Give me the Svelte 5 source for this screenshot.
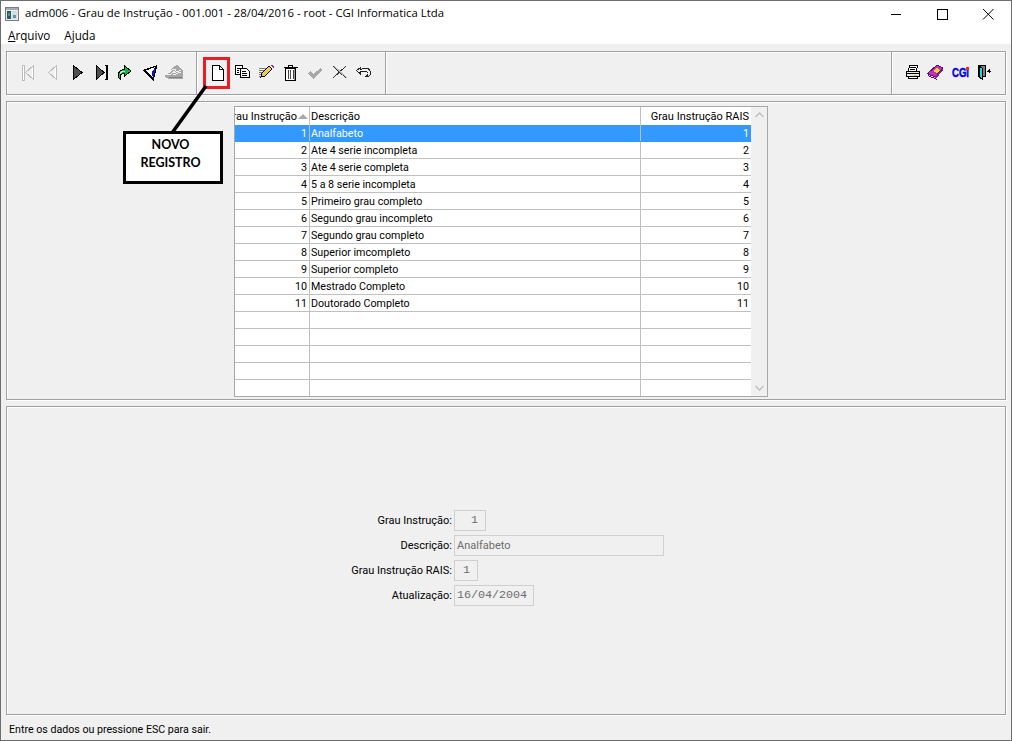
<script>
  const rows = [
    [1, 'Analfabeto', 1],
    [2, 'Ate 4 serie incompleta', 2],
    [3, 'Ate 4 serie completa', 3],
    [4, '5 a 8 serie incompleta', 4],
    [5, 'Primeiro grau completo', 5],
    [6, 'Segundo grau incompleto', 6],
    [7, 'Segundo grau completo', 7],
    [8, 'Superior imcompleto', 8],
    [9, 'Superior completo', 9],
    [10, 'Mestrado Completo', 10],
    [11, 'Doutorado Completo', 11],
    ['', '', ''], ['', '', ''], ['', '', ''], ['', '', ''], ['', '', '']
  ];
</script>

<div class="window">
  <header class="titlebar">
    <svg class="appicon" viewBox="0 0 14 14" width="14" height="14">
      <rect x="0.5" y="0.5" width="13" height="13" fill="#e8ecee" stroke="#7c7c7c"/>
      <rect x="1" y="1" width="12" height="2" fill="#a4aeb2"/>
      <rect x="2" y="4" width="4" height="8" fill="#2c5a5c"/>
      <rect x="3" y="6" width="2" height="3" fill="#3fa06a"/>
      <rect x="7" y="4" width="5" height="8" fill="#cfdce2"/>
      <rect x="8" y="8" width="3" height="3" fill="#6a8fb0"/>
    </svg>
    <span class="title">adm006 - Grau de Instrução - 001.001 - 28/04/2016 - root - CGI Informatica Ltda</span>
    <div class="controls">
      <svg viewBox="0 0 46 30" width="46" height="30" class="ctl"><path d="M18 13.500h10" stroke="#000" fill="none"/></svg>
      <svg viewBox="0 0 46 30" width="46" height="30" class="ctl"><rect x="18.500" y="8.500" width="10" height="10" stroke="#000" fill="none"/></svg>
      <svg viewBox="0 0 46 30" width="46" height="30" class="ctl"><path d="M18 8l10.500 10.500M28.500 8L18 18.500" stroke="#000" fill="none"/></svg>
    </div>
  </header>

  <nav class="menubar">
    <span><u>A</u>rquivo</span>
    <span>Ajuda</span>
  </nav>

  <section class="toolbar etched">
    <div class="group g1">
      <svg class="ic" viewBox="0 0 16 16"><path d="M2.500 0v15h1.500V0z" fill="#fff" stroke="#bdbdbd"/><path d="M13.500 .5L5.500 7.500l8 7z" fill="#f0f0f0" stroke="#bdbdbd"/><path d="M12.500 3v10" stroke="#fff"/></svg>
      <svg class="ic" viewBox="0 0 16 16"><path d="M12.500 .5L4.500 7.500l8 7z" fill="#f0f0f0" stroke="#bdbdbd"/><path d="M11.500 3v10" stroke="#fff"/></svg>
      <svg class="ic" viewBox="0 0 16 16"><path d="M3.500 .5L12 7.500l-8.500 7z" fill="#505050" stroke="#000"/></svg>
      <svg class="ic" viewBox="0 0 16 16"><path d="M2.500 .5L10 7.500l-7.500 7z" fill="#505050" stroke="#000"/><path d="M11 .5h2.500v14H11" fill="none" stroke="#000"/><path d="M12.500 1v13" stroke="#000"/></svg>
      <svg class="ic" viewBox="0 0 16 16"><path d="M4.500 14.500C.5 11 2 5 8.500 4.500V1L15 6l-6.500 5V8C5.500 8 3.500 10 4.500 14.500z" fill="#12b846" stroke="#000"/><path d="M4 9c1-2 3-3 5-3" stroke="#b8f5c8" fill="none"/></svg>
      <svg class="ic" viewBox="0 0 16 16"><path d="M0 5L15.500 0 11.500 16z" fill="#000"/><path d="M4 5.500L13.500 2 10.500 12z" fill="#fff"/><path d="M9.500 8L13.500 2 11.500 14z" fill="#1010c8"/></svg>
      <svg class="ic w18" viewBox="0 0 18 18"><path d="M0 11L8 3l4-2 6 5v9H4l-4-2z" fill="#a6a6a6"/><path d="M2 10l6-5 3 1-5 4zM9 9l7-3M8 11l8-3" fill="none" stroke="#f0f0f0"/><path d="M4 13h13" stroke="#808080"/></svg>
    </div>
    <div class="group g2">
      <svg class="ic" viewBox="0 0 16 16"><path d="M2.500 .5h7l3.500 3.500v11H2.500z" fill="#fff" stroke="#000"/><path d="M9.500 .5v3.500h3.500" fill="none" stroke="#000"/></svg>
      <svg class="ic" viewBox="0 0 16 16"><path d="M1.500 .5h7v3h-2v6h-5z" fill="#fff" stroke="#000"/><path d="M6.500 3.500h6l2.500 2.500v6H6.500z" fill="#fff" stroke="#000"/><path d="M8 6h4M8 8h5M8 10h5M3 3h3M3 5h2M3 7h2" stroke="#000"/></svg>
      <svg class="ic" viewBox="0 0 16 16"><path d="M1 3h9M1 5h8M1 7h6M1 9h5M1 11h4" stroke="#7a7a7a"/><path d="M3 12l1-4 7-7 3 3-7 7z" fill="#ecd23a" stroke="#000"/><path d="M12 0l3 3 1-1-2-2z" fill="#8b1f8b"/></svg>
      <svg class="ic" viewBox="0 0 16 16"><path d="M.5 2.500h14M5.500 2V.5h4V2" fill="none" stroke="#000"/><path d="M2.500 3.500h10v11.500h-10z" fill="#fff" stroke="#000"/><path d="M5 5v9M7.500 5v9M10 5v9" stroke="#444" stroke-width="1"/><path d="M11 4v11" stroke="#999"/></svg>
      <svg class="ic" viewBox="0 0 16 16"><path d="M1 8l3-2 2 3 8-6 1 2-9 9z" fill="#a8a8a8"/></svg>
      <svg class="ic" viewBox="0 0 16 16"><path d="M1 1l13 12M14 1L1 13" stroke="#333" fill="none"/><path d="M2 1l13 12" stroke="#b5b5b5" fill="none"/></svg>
      <svg class="ic" viewBox="0 0 16 16"><path d="M.5 5.500L4.500 2.500V4.500C9 2 14.500 3 14.500 8c0 2-1 3.500-3 3.500H9.500c2-.5 2.500-1.500 2.500-3 0-2-3-3-7.500-1.500v2z" fill="#f0f0f0" stroke="#222"/></svg>
    </div>
    <div class="group g3"></div>
    <div class="group g4">
      <svg class="ic" viewBox="0 0 16 16"><path d="M4.500 .5h8l-1 6h-8z" fill="#fff" stroke="#000"/><path d="M1.500 6.500h13v5h-13z" fill="#e8e8e8" stroke="#000"/><path d="M3.500 11.500h9v2h-9z" fill="#fff" stroke="#000"/><path d="M5 2.500h6M5 4.500h5M2 8.500h12" stroke="#000"/><path d="M9 10h3" stroke="#e3c93a"/></svg>
      <svg class="ic" viewBox="0 0 16 16"><path d="M0 8l9-8 6 3-8 9-6-2z" fill="#c030c0" stroke="#60105f"/><path d="M0 9l7 3 1 2-7-3z" fill="#f5d0f5" stroke="#60105f"/><path d="M7 12l8-9v2l-7 9z" fill="#8b1f8b"/><path d="M5 6l4-3 3 2-3 3z" fill="#e8d82a"/></svg>
      <svg class="ic w18 cgi" viewBox="0 0 18 16"><text x="0" y="12" textLength="17" lengthAdjust="spacingAndGlyphs" class="cgitext">CGi</text><rect x="14" y="2" width="3" height="3" fill="#ff2020"/></svg>
      <svg class="ic" viewBox="0 0 16 16"><path d="M2.500 .5h7v11h-7z" fill="#808080" stroke="#000"/><path d="M3 1l3 2v11l-3-2z" fill="#1fd8e0" stroke="#000"/><path d="M11 6h4M13 4v4M12 5v2" stroke="#000"/></svg>
    </div>
  </section>

  <section class="grid-panel etched">
    <div class="table">
      <div class="tbody">
        <div class="row head">
          <div class="c c1"><span class="clip">Grau Instrução</span><svg class="sort" viewBox="0 0 10 6" width="10" height="6"><path d="M0 6l5-5 5 5z" fill="#a8a8a8"/></svg></div>
          <div class="c c2">Descrição</div>
          <div class="c c3">Grau Instrução RAIS</div>
        </div>
        {#each rows as r, i}
          <div class="row" class:sel={i === 0}>
            <div class="c c1">{r[0]}</div>
            <div class="c c2">{r[1]}</div>
            <div class="c c3">{r[2]}</div>
          </div>
        {/each}
      </div>
      <div class="scroll">
        <svg viewBox="0 0 9 6" width="9" height="6"><path d="M.5 5L4.500 1l4 4" fill="none" stroke="#c0c0c0" stroke-width="1.500"/></svg>
        <svg viewBox="0 0 9 6" width="9" height="6"><path d="M.5 1l4 4 4-4" fill="none" stroke="#c0c0c0" stroke-width="1.500"/></svg>
      </div>
    </div>
  </section>

  <section class="form-panel etched">
    <div class="form">
      <label for="f1">Grau Instrução:</label>
      <div id="f1" class="field mono right w1">1</div>
      <label for="f2">Descrição:</label>
      <div id="f2" class="field w2">Analfabeto</div>
      <label for="f3">Grau Instrução RAIS:</label>
      <div id="f3" class="field mono right w3">1</div>
      <label for="f4">Atualização:</label>
      <div id="f4" class="field mono w4">16/04/2004</div>
    </div>
  </section>

  <footer class="status">Entre os dados ou pressione ESC para sair.</footer>

  <div class="redbox"></div>
  <svg class="pointer" viewBox="0 0 50 60" width="50" height="60"><path d="M39 1L5 48" stroke="#000" stroke-width="3.500" fill="none"/></svg>
  <div class="callout">NOVO<br />REGISTRO</div>
</div>

<style>
  :global(body) { margin: 0; background: #f0f0f0; }
  .window {
    position: relative;
    box-sizing: border-box;
    width: 1012px;
    height: 741px;
    display: flex;
    flex-direction: column;
    background: #f0f0f0;
    border: 1px solid #6e6e6e;
    font-family: Roboto, "Liberation Sans", sans-serif;
    font-size: 11px;
    color: #000;
    overflow: hidden;
  }
  .titlebar {
    height: 29px;
    flex: none;
    display: flex;
    align-items: center;
    background: #fff;
    padding-left: 4px;
    font-family: "Open Sans", sans-serif;
    font-size: 11.350px;
  }
  .appicon { flex: none; margin-right: 6px; margin-top: -3px; }
  .title { flex: 1; margin-top: -7px; }
  .controls { display: flex; flex: none; }
  .ctl { display: block; }
  .menubar {
    height: 14px;
    flex: none;
    display: flex;
    align-items: flex-start;
    gap: 14px;
    padding-left: 7px;
    background: #fff;
    font-family: "Open Sans", sans-serif;
    font-size: 11.700px;
    line-height: 10px;
  }
  .etched {
    border: 1px solid #a0a0a0;
    box-shadow: inset 1px 1px 0 #fff, 1px 1px 0 #fff;
    margin: 0 5px;
    flex: none;
  }
  .toolbar {
    margin-top: 7px;
    height: 44px;
    box-sizing: border-box;
    display: flex;
  }
  .group {
    display: flex;
    align-items: center;
    box-sizing: border-box;
    height: 100%;
    gap: 8px;
    border-right: 1px solid #a0a0a0;
    box-shadow: 1px 0 0 #fff;
  }
  .ic { width: 16px; height: 16px; display: block; flex: none; shape-rendering: crispEdges; overflow: visible; }
  .w18 { width: 18px; height: 18px; }
  .cgi { height: 16px; }
  .cgitext { font: 700 13px "Liberation Sans", sans-serif; fill: #0000f0; stroke: #0000f0; stroke-width: 0.500px; }
  .g1 { width: 190px; padding-left: 13px; }
  .g1 .ic:nth-child(3), .g1 .ic:nth-child(6) { margin-left: 2px; }
  .g1 .ic:nth-child(5) { margin-left: -2px; }
  .g1 .ic:nth-child(7) { margin-left: -1px; }
  .g2 { width: 189px; padding-left: 13px; }
  .g2 .ic:nth-child(4), .g2 .ic:nth-child(6) { margin-left: 1px; }
  .g3 { width: 506px; }
  .g4 { flex: 1; padding-left: 13px; border-right: 0; box-shadow: none; }
  .g4 .ic:nth-child(2) { margin-left: -1px; }
  .g4 .ic:nth-child(4) { margin-left: -2px; }
  .grid-panel {
    margin-top: 6px;
    height: 299px;
    box-sizing: border-box;
    padding: 4px 0 0 227px;
  }
  .table {
    width: 534px;
    height: 291px;
    box-sizing: border-box;
    border: 1px solid #a8a8a8;
    background: #fff;
    display: flex;
  }
  .tbody { width: 516px; flex: none; overflow: hidden; }
  .row { display: flex; height: 17px; box-sizing: border-box; border-bottom: 1px solid #c0c0c0; line-height: 18px; font-size: 10.700px; }
  .head { height: 18px; border-bottom: 0; line-height: 20px; font-size: 11px; }
  .head .c1 { position: relative; }
  .clip { position: absolute; right: 12px; top: 0; white-space: nowrap; }
  .sort { position: absolute; right: 1px; top: 6px; }
  .sel { background: #3399ff; color: #fff; border-bottom-color: #3399ff; }
  .c { box-sizing: border-box; height: 100%; border-right: 1px solid #c0c0c0; padding: 0 2px 0 1px; white-space: nowrap; overflow: hidden; }
  .c1 { width: 75px; text-align: right; }
  .c2 { width: 331px; }
  .c3 { width: 110px; text-align: right; border-right: 0; }
  .scroll {
    flex: 1;
    background: #f0f0f0;
    display: flex;
    flex-direction: column;
    justify-content: space-between;
    align-items: center;
    padding: 5px 0;
  }
  .form-panel {
    margin-top: 6px;
    height: 309px;
    box-sizing: border-box;
    padding: 103px 0 0 0;
  }
  .form {
    display: grid;
    grid-template-columns: 445px auto;
    grid-auto-rows: 21px;
    row-gap: 4px;
    column-gap: 2px;
    justify-items: start;
    align-items: center;
  }
  label { justify-self: end; }
  .field {
    box-sizing: border-box;
    height: 21px;
    border: 1px solid #cfcfcf;
    background: #f0f0f0;
    color: #6d6d6d;
    padding: 0 2px;
    line-height: 19px;
  }
  .mono { font-family: "Liberation Mono", monospace; font-size: 11.700px; }
  .right { text-align: right; padding-right: 7px; }
  .w1 { width: 32px; }
  .w2 { width: 210px; }
  .w3 { width: 24px; }
  .w4 { width: 80px; }
  .status {
    flex: 1;
    padding: 3px 0 0 8px;
    display: flex;
    align-items: center;
    font-size: 10.650px;
  }
  .redbox {
    position: absolute;
    left: 202px;
    top: 56px;
    width: 21px;
    height: 26px;
    border: 3px solid #ed1c24;
  }
  .pointer { position: absolute; left: 166px; top: 84px; }
  .callout {
    position: absolute;
    left: 122px;
    top: 130px;
    box-sizing: border-box;
    width: 100px;
    height: 53px;
    border: 3px solid #000;
    background: #fff;
    text-align: center;
    font-family: "Lato", sans-serif;
    font-weight: 700;
    font-size: 12.500px;
    line-height: 18px;
    padding: 2px 5px 0 0;
  }
</style>
